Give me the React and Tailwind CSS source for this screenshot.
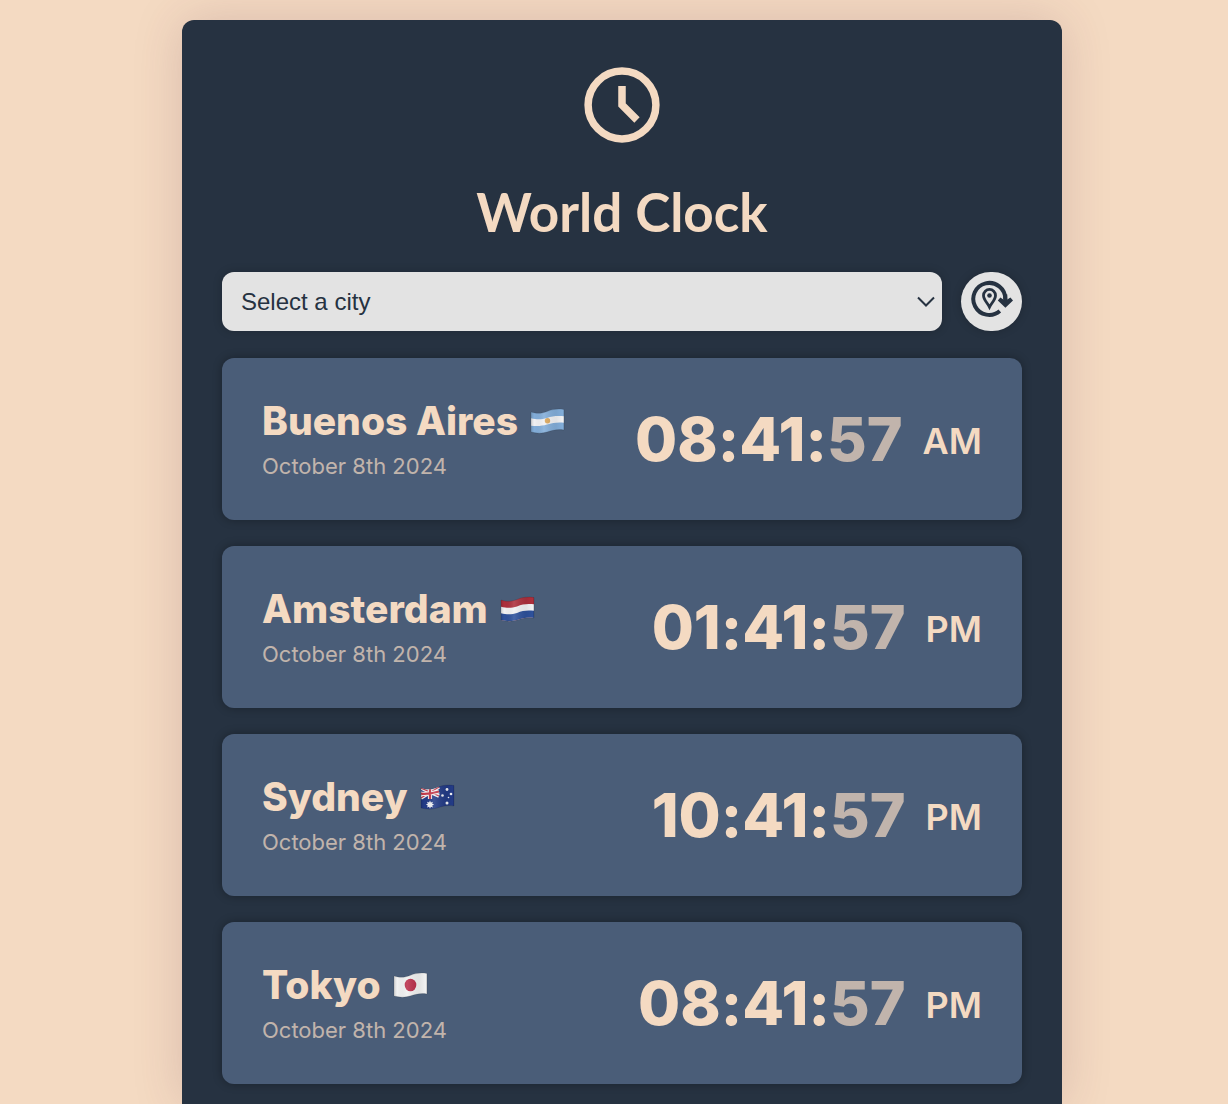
import { useId, useState } from "react";

const WAVE = "M1 4 C7 6 12 5.500 17 3.500 C23 1 28 0.500 34 1.500 V22 C28 21 23 22 17 24 C12 25.500 7 25.500 1 24 Z";

function ArgentinaFlag() {
  return (
    <>
      <rect width="35" height="26" fill="#82add9" />
      <path d="M0 10 C7 12 12 11.500 17 10 C23 8 28 7.500 35 8.500 V15 C28 14 23 15 17 16.500 C12 18 7 18.500 0 17.500 Z" fill="#f1f1f3" />
      <circle cx="17.500" cy="12.800" r="2.700" fill="#dba75c" />
    </>
  );
}

function NetherlandsFlag() {
  return (
    <>
      <rect width="35" height="26" fill="#ad2f3c" />
      <path d="M0 10.500 C7 12.500 12 12 17 10.500 C23 8 28 7.500 35 8.500 V26 H0 Z" fill="#f1f1f3" />
      <path d="M0 17 C7 19 12 18.500 17 17 C23 14.500 28 14 35 15 V26 H0 Z" fill="#2e519b" />
    </>
  );
}

function AustraliaFlag() {
  return (
    <>
      <rect width="35" height="26" fill="#233b86" />
      <path d="M1 4 L19 12 M1 14 L19 3" stroke="#f1f1f3" strokeWidth="3.600" />
      <path d="M1 4 L19 12 M1 14 L19 3" stroke="#c53b4c" strokeWidth="1.200" />
      <path d="M10 3 V15 M0 9.500 C7 10.500 12 9.500 19 7.500" stroke="#f1f1f3" strokeWidth="4.200" fill="none" />
      <path d="M10 3 V15 M0 9.500 C7 10.500 12 9.500 19 7.500" stroke="#c53b4c" strokeWidth="2.200" fill="none" />
      <path d="M10 16.500 l.9 1.900 2-.7-.7 2 1.900.9-1.900.9.7 2-2-.7-.9 1.900-.9-1.900-2 .7.700-2-1.900-.9 1.900-.9-.7-2 2 .7z" fill="#f1f1f3" />
      <g fill="#f1f1f3">
        <circle cx="27" cy="5.500" r="1.400" />
        <circle cx="22.500" cy="11.500" r="1.300" />
        <circle cx="31" cy="10" r="1.300" />
        <circle cx="28.500" cy="13.500" r=".8" />
        <circle cx="27" cy="19" r="1.500" />
      </g>
    </>
  );
}

function JapanFlag() {
  return (
    <>
      <rect width="35" height="26" fill="#f1f1f1" />
      <ellipse cx="17.500" cy="13" rx="5.800" ry="6.300" fill="#bb2e4a" />
    </>
  );
}

function Flag({ label, children }) {
  const id = useId();
  return (
    <svg role="img" aria-label={label} viewBox="0 0 35 26" className="h-[26px] w-[35px] shrink-0">
      <clipPath id={id + "c"}>
        <path d={WAVE} />
      </clipPath>
      <linearGradient id={id + "g"}>
        <stop offset="0" stopColor="#000" stopOpacity=".18" />
        <stop offset=".12" stopColor="#000" stopOpacity="0" />
        <stop offset=".4" stopColor="#fff" stopOpacity=".12" />
        <stop offset=".75" stopColor="#000" stopOpacity=".06" />
        <stop offset=".93" stopColor="#000" stopOpacity="0" />
        <stop offset="1" stopColor="#000" stopOpacity=".2" />
      </linearGradient>
      <g clipPath={`url(#${id}c)`}>
        {children}
        <rect width="35" height="26" fill={`url(#${id}g)`} />
      </g>
      <path d={WAVE} fill="none" stroke="#000" strokeOpacity=".15" strokeWidth=".8" />
    </svg>
  );
}

const CITIES = [
  { name: "Buenos Aires", country: "Argentina", Art: ArgentinaFlag, hm: "08:41:", sec: "57", period: "AM" },
  { name: "Amsterdam", country: "Netherlands", Art: NetherlandsFlag, hm: "01:41:", sec: "57", period: "PM" },
  { name: "Sydney", country: "Australia", Art: AustraliaFlag, hm: "10:41:", sec: "57", period: "PM" },
  { name: "Tokyo", country: "Japan", Art: JapanFlag, hm: "08:41:", sec: "57", period: "PM" },
];

function CityCard({ city }) {
  const { Art } = city;
  return (
    <li className="flex items-center justify-between rounded-xl bg-[#4a5d78] px-10 py-10 shadow-[0_0_10px_rgba(0,0,0,0.3)]">
      <div>
        <h2 className="flex items-center gap-3 text-[39px] leading-[46px] font-extrabold">
          {city.name}
          <Flag label={city.country}>
            <Art />
          </Flag>
        </h2>
        <p className="pt-2 text-[22px] leading-7 opacity-70">October 8th 2024</p>
      </div>
      <p className="flex items-center gap-5">
        <span className="text-[61px] leading-[78px] font-extrabold [font-feature-settings:'calt'_0]">
          {city.hm}
          <span className="opacity-70">{city.sec}</span>
        </span>
        <span className="pt-1 text-[36px] leading-10 font-semibold">{city.period}</span>
      </p>
    </li>
  );
}

export default function App() {
  const [choice, setChoice] = useState("");
  return (
    <div className="flex min-h-screen justify-center bg-[#f4dac2] pt-5 pl-4 font-['Inter',sans-serif] text-[#f4dac2]">
      <main className="w-full max-w-[880px] rounded-t-xl bg-[#263241] px-10 pt-10 pb-5 shadow-[0_0_50px_rgba(98,44,70,0.18)]">
        <header className="flex flex-col items-center">
          <svg aria-hidden="true" viewBox="0 0 90 90" className="size-[90px]" fill="none" stroke="#f4dac2" strokeWidth="7.500">
            <circle cx="45" cy="45" r="33.900" />
            <path d="M45 26 V45 L60 60" />
          </svg>
          <h1 className="pt-6 text-[53px] leading-[76px] font-bold font-['Lato',sans-serif]">World Clock</h1>
        </header>
        <form className="mt-[22px] flex gap-[19px]" onSubmit={(e) => e.preventDefault()}>
          <div className="relative grow">
            <select
              aria-label="Select a city"
              value={choice}
              onChange={(e) => setChoice(e.target.value)}
              className="h-[59px] w-full appearance-none rounded-xl bg-[#e3e3e3] pr-10 pl-[19px] font-['Liberation_Sans',sans-serif] text-2xl text-[#263241] shadow-[0_0_10px_rgba(0,0,0,0.2)]"
            >
              <option value="">Select a city</option>
              {CITIES.map((c) => (
                <option key={c.name}>{c.name}</option>
              ))}
            </select>
            <svg aria-hidden="true" viewBox="0 0 18 12" className="pointer-events-none absolute top-6 right-[7px] h-3 w-[18px]" fill="none" stroke="#263241" strokeWidth="2">
              <path d="M1 1.500 L9 9.500 L17 1.500" />
            </svg>
          </div>
          <button type="submit" aria-label="Use current location" className="flex h-[59px] w-[61px] items-start justify-center rounded-full bg-[#e3e3e3] pt-2 shadow-[0_0_10px_rgba(0,0,0,0.2)]">
            <svg aria-hidden="true" viewBox="0 0 42 38" className="h-[38px] w-[42px]" fill="none" stroke="#263241">
              <path d="M28.800 31 A16 16 0 1 1 34.300 19" strokeWidth="4" />
              <path d="M26.800 20.400 L29.400 17.400 L32.300 19.600 V14.500 H36.300 V19.600 L39.400 17.400 L42 20.400 L34.400 27.800 Z" fill="#263241" stroke="none" />
              <path d="M18.500 27 C16.500 23 12.500 19.500 12.500 15.400 A6 6 0 0 1 24.500 15.400 C24.500 19.500 20.500 23 18.500 27 Z" strokeWidth="2.800" />
              <circle cx="18.500" cy="15.500" r="2.300" fill="#263241" stroke="none" />
            </svg>
          </button>
        </form>
        <ul className="mt-[27px] flex flex-col gap-[26px]">
          {CITIES.map((city) => (
            <CityCard key={city.name} city={city} />
          ))}
        </ul>
      </main>
    </div>
  );
}
